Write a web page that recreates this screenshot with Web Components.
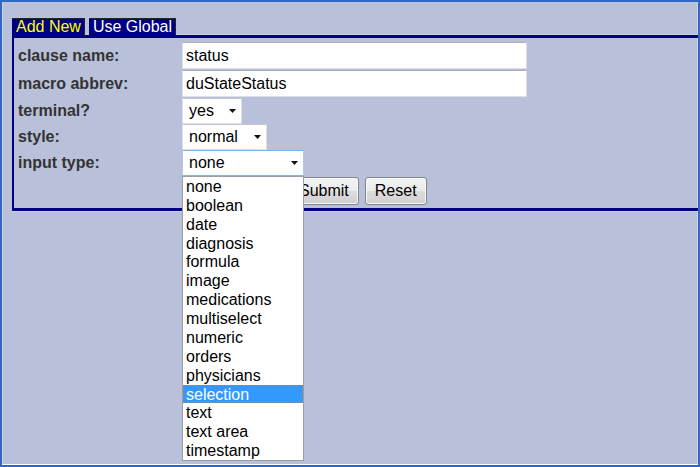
<!DOCTYPE html>
<html lang="en">
<head>
<meta charset="utf-8">
<title>Add New</title>
<style>
body { margin: 0; font: 16px/20px "Liberation Sans", Arial, sans-serif; color: #000; }
</style>
</head>
<body>
<clause-window>
  <tab-strip slot="tabs"></tab-strip>
  <clause-panel>
    <text-field label="clause name:" value="status"></text-field>
    <text-field label="macro abbrev:" value="duStateStatus"></text-field>
    <select-field label="terminal?" options="yes,no" size="short"></select-field>
    <select-field label="style:" options="normal" size="medium"></select-field>
    <select-field label="input type:" options="none,boolean,date,diagnosis,formula,image,medications,multiselect,numeric,orders,physicians,selection,text,text area,timestamp" size="long" open="selection"></select-field>
    <form-actions></form-actions>
  </clause-panel>
</clause-window>
<script>
class BaseElement extends HTMLElement {
  connectedCallback() {
    if (!this.shadowRoot) this.attachShadow({ mode: "open" }).innerHTML = this.render();
  }
}

customElements.define("clause-window", class extends BaseElement {
  render() {
    return `<style>
      :host { display: block; box-sizing: border-box; min-height: 100vh; padding: 16px 0 0 10px;
        background: #b9c1da; border: 2px solid #2f68c5;
        box-shadow: inset 0 -1px #fff, inset 1px 0 #cdd1dc, inset -1px 0 #cdd1dc; }
    </style><slot name="tabs"></slot><slot></slot>`;
  }
});

customElements.define("tab-strip", class extends BaseElement {
  render() {
    return `<style>
      :host { display: block; }
      nav { display: flex; gap: 4px; }
      a { padding: 1px 4px 0; line-height: 16px; background: #000080; color: #fff; text-decoration: none;
        box-shadow: inset -1px 1px #222238; }
      a[aria-current] { color: #ff0; }
    </style>
    <nav><a href="#add" aria-current="page">Add New</a><a href="#global">Use Global</a></nav>`;
  }
});

customElements.define("clause-panel", class extends BaseElement {
  render() {
    return `<style>
      :host { display: block; border: 3px solid #000080; border-width: 3px 0 3px 2px; padding: 4px 0 3px 4px;
        box-shadow: 0 -1px #ccd1dc, 0 1px #ccd1dc; }
    </style><slot></slot>`;
  }
});

const rowStyle = `
  :host { display: grid; grid-template-columns: 164px minmax(0, 1fr); align-items: center; }
  label { font-weight: bold; color: #333; }
`;

customElements.define("text-field", class extends BaseElement {
  render() {
    return `<style>${rowStyle}
      :host { padding-bottom: 1px; }
      input { box-sizing: border-box; width: 100%; max-width: 345px; height: 27px; padding: 0 3px; font: inherit;
        color: #000; background: #fff; border: 1px solid #dcdfe8; border-top-color: #abadb3; }
    </style>
    <label for="field">${this.getAttribute("label")}</label>
    <input id="field" type="text" value="${this.getAttribute("value")}">`;
  }
});

customElements.define("select-field", class extends BaseElement {
  render() {
    const options = this.getAttribute("options").split(",");
    const chosen = this.getAttribute("open");
    const list = chosen ? `<ul role="listbox" aria-label="${this.getAttribute("label")}">${
      options.map(o => `<li role="option" aria-selected="${o === chosen}">${o}</li>`).join("")}</ul>` : "";
    return `<style>${rowStyle}
      .box { position: relative; width: 60px; }
      :host([size="medium"]) .box { width: 85px; }
      :host([size="long"]) .box { width: 122px; }
      select { display: block; box-sizing: border-box; width: 100%; height: 26px; padding: 0 6px; appearance: none;
        font: inherit; color: #000; background: #fff; border: 1px solid #dcdfe8; border-top-color: #c3c6d0; border-radius: 0; }
      :host([open]) select { border-color: #7eb4ea #a9cbe8; }
      svg { position: absolute; right: 6px; top: 11px; width: 7px; height: 4px; pointer-events: none; }
      ul { position: absolute; z-index: 1; top: 100%; left: 0; box-sizing: border-box; width: 100%; height: 285px;
        display: grid; grid-auto-rows: minmax(0, 1fr); margin: 0; padding: 0;
        list-style: none; background: #fff; border: 1px solid #999da6; line-height: 19px; }
      li { padding: 0 3px; white-space: nowrap; }
      li[aria-selected="true"] { background: #3399ff; color: #fff; box-shadow: inset 0 0 0 1px #6d8fae; }
    </style>
    <label for="field">${this.getAttribute("label")}</label>
    <div class="box"><select id="field">${options.map(o => `<option>${o}</option>`).join("")}</select>
    <svg viewBox="0 0 7 4" aria-hidden="true"><path d="M0 0H7L3.5 4Z" fill="#111"/></svg>${list}</div>`;
  }
});

customElements.define("form-actions", class extends BaseElement {
  render() {
    return `<style>
      :host { display: flex; gap: 6px; padding: 1px 0 0 271px; }
      button { height: 28px; padding: 0 9px; font: inherit; line-height: 24px; color: #000; border: 1px solid #858585; border-radius: 3px;
        background: linear-gradient(#f3f3f3, #ebebeb 50%, #dddddd 50%, #cfcfcf); box-shadow: inset 0 0 0 1px #f8f8f8; }
    </style>
    <button type="submit">Submit</button><button type="reset">Reset</button>`;
  }
});
</script>
</body>
</html>
